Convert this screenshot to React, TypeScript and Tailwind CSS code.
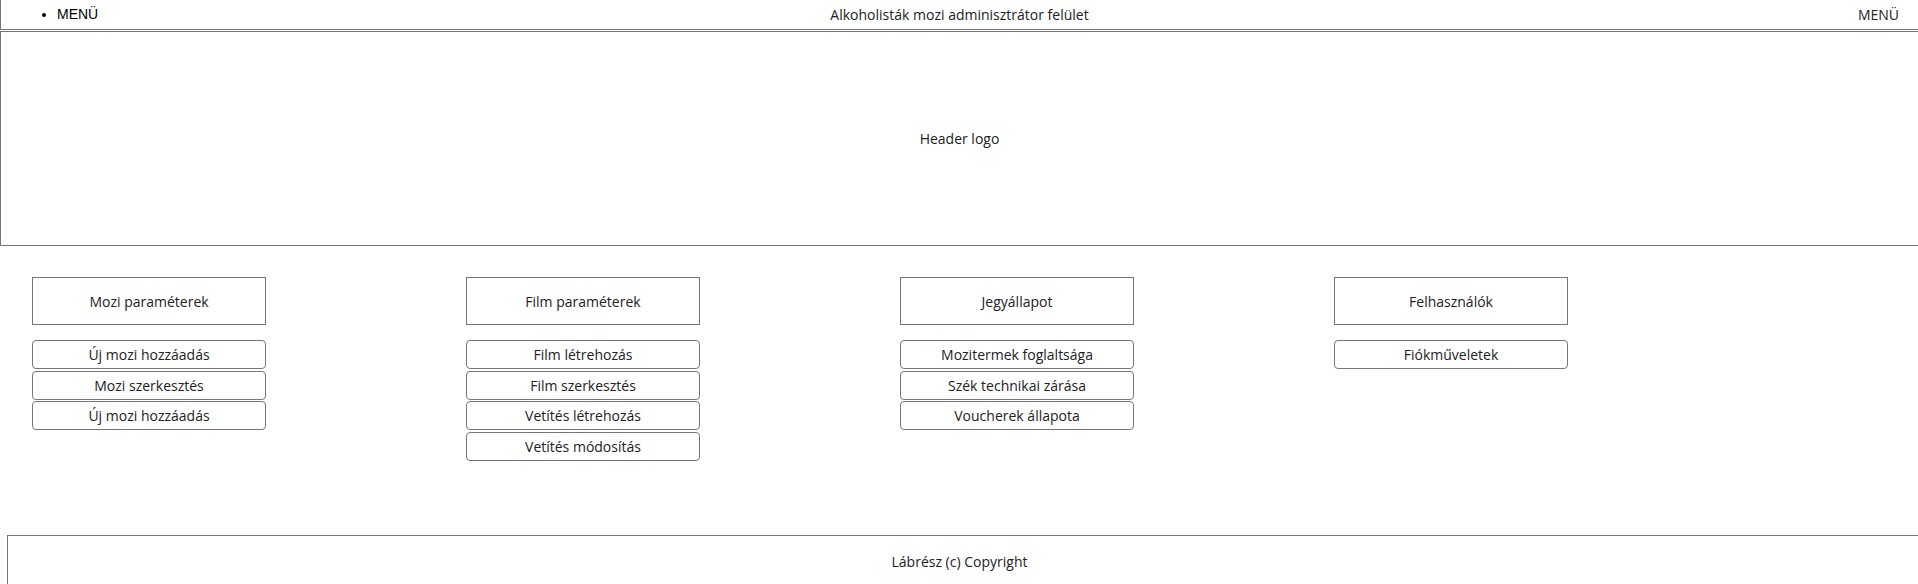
const menuGroups = [
  {
    title: 'Mozi paraméterek',
    items: ['Új mozi hozzáadás', 'Mozi szerkesztés', 'Új mozi hozzáadás'],
  },
  {
    title: 'Film paraméterek',
    items: ['Film létrehozás', 'Film szerkesztés', 'Vetítés létrehozás', 'Vetítés módosítás'],
  },
  {
    title: 'Jegyállapot',
    items: ['Mozitermek foglaltsága', 'Szék technikai zárása', 'Voucherek állapota'],
  },
  {
    title: 'Felhasználók',
    items: ['Fiókműveletek'],
  },
];

function MenuGroup({ title, items }: { title: string; items: string[] }) {
  return (
    <div className="flex w-[234px] flex-col">
      <div className="flex h-[48px] items-center justify-center border border-[#767676] text-[14px] text-[#222]">
        {title}
      </div>
      <div className="mt-[15px] flex flex-col gap-[1.7px]">
        {items.map((item, i) => (
          <button
            key={i}
            type="button"
            className="h-[29px] rounded-[4px] border border-[#767676] bg-white text-[14px] text-[#222]"
          >
            {item}
          </button>
        ))}
      </div>
    </div>
  );
}

export default function App() {
  return (
    <div className="h-[584px] overflow-hidden bg-white font-['Open_Sans',sans-serif] text-[#222]">
      {/* top bar */}
      <nav className="relative flex h-[30px] items-center border-b border-l border-[#767676]">
        <ul className="list-disc pl-[56px] font-['Liberation_Sans',Arial,sans-serif] text-[14px] text-black">
          <li>MENÜ</li>
        </ul>
        <div className="absolute left-1/2 -translate-x-1/2 text-[14px] whitespace-nowrap">
          Alkoholisták mozi adminisztrátor felület
        </div>
        <div className="ml-auto pr-[19px] text-[14px]">MENÜ</div>
      </nav>

      {/* header */}
      <header className="mt-[1px] flex h-[215px] items-center justify-center border-y border-l border-[#767676] text-[14px]">
        Header logo
      </header>

      {/* menu groups */}
      <main className="mt-[31px] flex gap-[200px] pl-[32px]">
        {menuGroups.map((group) => (
          <MenuGroup key={group.title} title={group.title} items={group.items} />
        ))}
      </main>

      {/* footer */}
      <footer className="mt-[74px] ml-[7px] flex h-[60px] justify-center border-t border-l border-[#767676] pt-[15px] text-[14px]">
        <span className="-ml-[7px]">Lábrész (c) Copyright</span>
      </footer>
    </div>
  );
}
